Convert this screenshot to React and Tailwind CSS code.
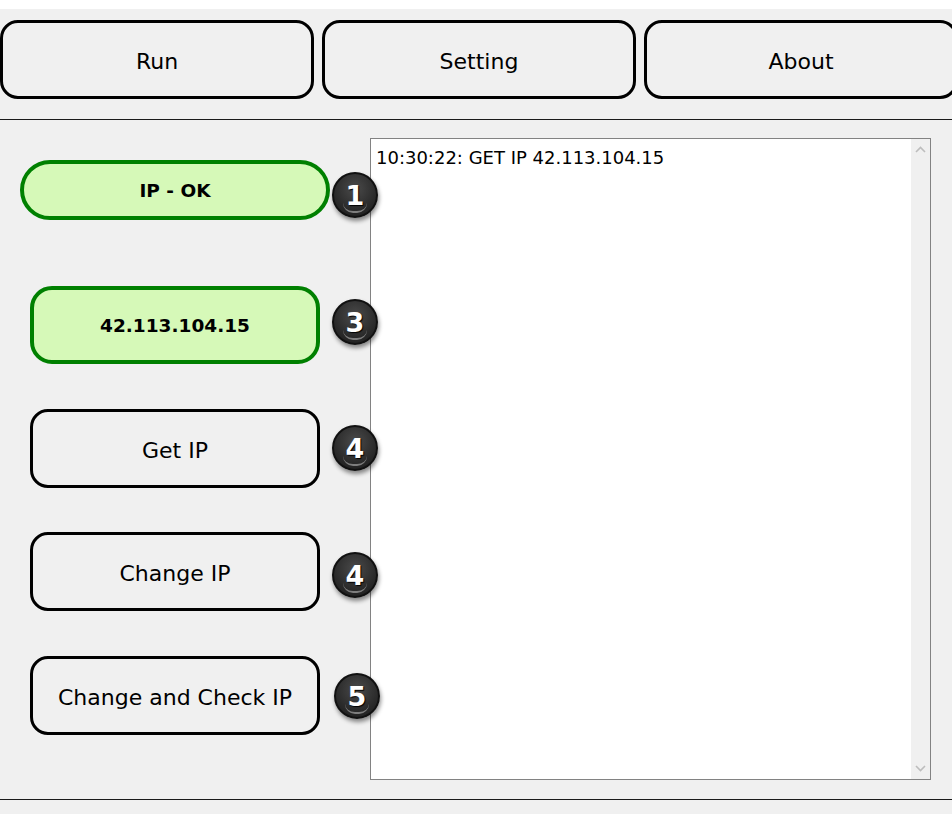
import React from 'react'

const sans = { fontFamily: '"DejaVu Sans", sans-serif' }

function Badge({ n, top, left = 332 }) {
  return (
    <div
      className="absolute z-10 w-[46px] h-[46px] rounded-full border-2 border-[#111] bg-[radial-gradient(circle_at_50%_35%,#4a4a4a,#262626_70%,#1a1a1a)] shadow-[1px_3px_4px_rgba(0,0,0,0.45)] flex items-center justify-center overflow-hidden"
      style={{ top, left }}
    >
      <div className="absolute left-[9px] right-[9px] bottom-[3px] h-[10px] rounded-b-full border-b-2 border-white/40" />
      <span
        className="relative text-white font-bold text-[27px] leading-none [text-shadow:1px_1px_1px_#000]"
        style={sans}
      >
        {n}
      </span>
    </div>
  )
}

function TopButton({ label }) {
  return (
    <div className="shrink-0 w-[314px] h-[79px] pt-[3px] rounded-[18px] border-[3px] border-black flex items-center justify-center text-[22px] text-black">
      {label}
    </div>
  )
}

function ActionButton({ label, className }) {
  return (
    <div className={`ml-[30px] w-[290px] h-[79px] pt-[3px] rounded-[18px] border-[3px] border-black flex items-center justify-center text-[22px] text-black ${className}`}>
      {label}
    </div>
  )
}

export default function App() {
  return (
    <div className="w-[952px] h-[814px] bg-[#f0f0f0] overflow-hidden flex flex-col" style={sans}>
      <div className="h-[9px] bg-white" />

      {/* top tabs */}
      <div className="flex gap-[8px] pt-[11px] overflow-hidden">
        <TopButton label="Run" />
        <TopButton label="Setting" />
        <TopButton label="About" />
      </div>

      <div className="mt-[20px] border-t border-[#1a1a1a]" />

      {/* main */}
      <div className="flex h-[679px] relative">
        <div className="w-[370px] shrink-0 flex flex-col">
          <div className="mt-[40px] ml-[20px] w-[310px] h-[60px] pt-[1px] rounded-full border-4 border-[#008000] bg-[#d6f9b8] flex items-center justify-center font-bold text-[18.5px] text-black">
            IP - OK
          </div>
          <div className="mt-[66px] ml-[30px] w-[290px] h-[78px] pt-[1px] rounded-[22px] border-4 border-[#008000] bg-[#d6f9b8] flex items-center justify-center font-bold text-[18.5px] text-black">
            42.113.104.15
          </div>
          <ActionButton label="Get IP" className="mt-[45px]" />
          <ActionButton label="Change IP" className="mt-[44px] h-[78px]" />
          <ActionButton label="Change and Check IP" className="mt-[45px]" />
        </div>

        <Badge n="1" top={52} />
        <Badge n="3" top={179} />
        <Badge n="4" top={305} />
        <Badge n="4" top={432} />
        <Badge n="5" top={553} left={334} />

        {/* log box */}
        <div className="mt-[18px] w-[561px] h-[642px] border border-[#828282] bg-white flex">
          <div className="flex-1 pl-[5px] pt-[8px] text-[18px] leading-[22px] text-black">
            10:30:22: GET IP 42.113.104.15
          </div>
          <div className="w-[19px] bg-[#f0f0f0] flex flex-col items-center justify-between py-[7px]">
            <svg width="11" height="7" viewBox="0 0 11 7"><path d="M1 6 L5.5 1.5 L10 6" fill="none" stroke="#bdbdbd" strokeWidth="1.6" /></svg>
            <svg width="11" height="7" viewBox="0 0 11 7"><path d="M1 1 L5.5 5.5 L10 1" fill="none" stroke="#bdbdbd" strokeWidth="1.6" /></svg>
          </div>
        </div>
      </div>

      <div className="border-t border-[#1a1a1a]" />
    </div>
  )
}
